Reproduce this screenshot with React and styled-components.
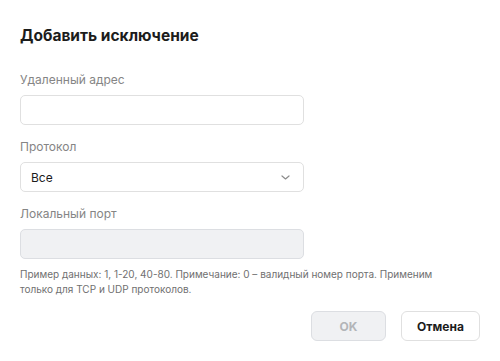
import React from 'react';
import styled, { createGlobalStyle } from 'styled-components';

const GlobalStyle = createGlobalStyle`
  body {
    margin: 0;
    background: #ffffff;
    font-family: Inter, "Noto Sans", sans-serif;
  }
`;

const Dialog = styled.div`
  width: 500px;
  height: 361px;
  box-sizing: border-box;
  padding: 26px 20px 20px;
  display: flex;
  flex-direction: column;
`;

const Title = styled.h2`
  margin: 0 0 26px;
  font-size: 15.5px;
  line-height: 20px;
  font-weight: 700;
  color: #1c1c1c;
`;

const Field = styled.div`
  display: flex;
  flex-direction: column;
  width: 284px;
  margin-bottom: 14px;
`;

const Label = styled.label`
  font-size: 12px;
  line-height: 16px;
  color: #858585;
  margin-bottom: 7px;
`;

const Input = styled.input`
  box-sizing: border-box;
  height: 30px;
  width: 100%;
  padding: 0 10px;
  border: 1px solid ${(p) => (p.disabled ? '#dcdee2' : '#e0e0e0')};
  border-radius: 5px;
  background: ${(p) => (p.disabled ? '#f0f1f3' : '#ffffff')};
  font: inherit;
  font-size: 12px;
  outline: none;
`;

const Select = styled.div`
  box-sizing: border-box;
  height: 30px;
  padding: 0 13px 0 10px;
  border: 1px solid #e0e0e0;
  border-radius: 5px;
  display: flex;
  align-items: center;
  justify-content: space-between;
  font-size: 12px;
  color: #1c1c1c;
`;

const Hint = styled.p`
  margin: -6px 0 0;
  font-size: 10px;
  line-height: 15px;
  color: #707070;
`;

const Actions = styled.div`
  margin-top: auto;
  display: flex;
  justify-content: flex-end;
  gap: 15px;
`;

const Button = styled.button`
  box-sizing: border-box;
  height: 30px;
  min-width: ${(p) => p.$w}px;
  padding: 0 14px;
  border-radius: 6px;
  font-family: inherit;
  font-size: 12px;
  font-weight: 700;
  border: 1px solid ${(p) => (p.disabled ? '#dcdee2' : '#e0e0e0')};
  background: ${(p) => (p.disabled ? '#f0f1f3' : '#ffffff')};
  color: ${(p) => (p.disabled ? '#b3b5b8' : '#1c1c1c')};
`;

const Chevron = () => (
  <svg width="9" height="5" viewBox="0 0 9 5" fill="none">
    <path d="M1 1l3.5 3 3.5-3" stroke="#8c8c8c" strokeWidth="1.2" strokeLinecap="round" strokeLinejoin="round" />
  </svg>
);

export default function App() {
  return (
    <>
      <GlobalStyle />
      <Dialog>
        <Title>Добавить исключение</Title>
        <Field>
          <Label>Удаленный адрес</Label>
          <Input />
        </Field>
        <Field>
          <Label>Протокол</Label>
          <Select>
            <span>Все</span>
            <Chevron />
          </Select>
        </Field>
        <Field>
          <Label>Локальный порт</Label>
          <Input disabled />
        </Field>
        <Hint>
          Пример данных: 1, 1-20, 40-80. Примечание: 0 – валидный номер порта. Применим
          <br />
          только для TCP и UDP протоколов.
        </Hint>
        <Actions>
          <Button disabled $w={75}>OK</Button>
          <Button $w={79}>Отмена</Button>
        </Actions>
      </Dialog>
    </>
  );
}
